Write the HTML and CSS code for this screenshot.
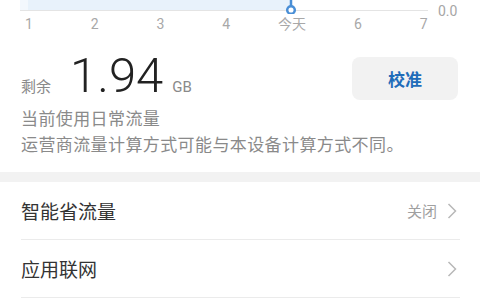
FILE: index.html
```html
<!DOCTYPE html>
<html lang="zh-CN">
<head>
    <meta charset="UTF-8">
    <meta name="viewport" content="width=device-width, initial-scale=1.0">
    <title>流量管理</title>
    <link rel="stylesheet" href="styles.css">
</head>
<body>
    <div class="chart">
        <svg class="chart-plot" width="480" height="14" viewBox="0 0 480 14">
            <rect x="20" y="0" width="8" height="10" fill="#f3f8fd"/>
            <rect x="28" y="0" width="263" height="10" fill="#e8f2fb"/>
            <line x1="20" y1="10.5" x2="428" y2="10.5" stroke="#e4e4e4" stroke-width="1"/>
            <line x1="291" y1="0" x2="291" y2="6" stroke="#4a8fd6" stroke-width="2.5"/>
            <circle cx="291" cy="10" r="3.8" fill="#fff" stroke="#4a8fd6" stroke-width="2.5"/>
        </svg>
        <span class="chart-max">0.0</span>
        <div class="chart-axis">
            <span>1</span>
            <span>2</span>
            <span>3</span>
            <span>4</span>
            <span>今天</span>
            <span>6</span>
            <span>7</span>
        </div>
    </div>

    <div class="usage">
        <div class="remain">
            <span class="remain-label">剩余</span>
            <span class="remain-value">1.94</span>
            <span class="remain-unit">GB</span>
        </div>
        <button class="calibrate">校准</button>
    </div>

    <div class="desc">
        <p>当前使用日常流量</p>
        <p>运营商流量计算方式可能与本设备计算方式不同。</p>
    </div>

    <div class="gap"></div>

    <div class="list">
        <div class="list-item">
            <span class="item-title">智能省流量</span>
            <span class="item-extra">
                <span class="item-value">关闭</span>
                <svg class="chevron" width="10" height="16" viewBox="0 0 10 16">
                    <polyline points="1.5,1 8.5,8 1.5,15" fill="none" stroke="#b8b8b8" stroke-width="1.5"/>
                </svg>
            </span>
        </div>
        <div class="list-item">
            <span class="item-title">应用联网</span>
            <span class="item-extra">
                <svg class="chevron" width="10" height="16" viewBox="0 0 10 16">
                    <polyline points="1.5,1 8.5,8 1.5,15" fill="none" stroke="#b8b8b8" stroke-width="1.5"/>
                </svg>
            </span>
        </div>
    </div>
</body>
</html>
```

FILE: styles.css
```css
body {
    margin: 0;
    padding: 0;
    background-color: #fff;
    font-family: Roboto, "Noto Sans CJK SC", sans-serif;
    color: #333;
    width: 480px;
    height: 300px;
    overflow: hidden;
}

.chart {
    position: relative;
    height: 40px;
}

.chart-plot {
    display: block;
}

.chart-max {
    position: absolute;
    top: 2px;
    left: 438px;
    font-size: 14px;
    line-height: 18px;
    color: #a6a6a6;
}

.chart-axis {
    display: grid;
    grid-template-columns: repeat(7, 65.8px);
    margin-left: -4px;
    margin-top: 2px;
    font-size: 14px;
    line-height: 16px;
    color: #a8a8a8;
    text-align: center;
}

.usage {
    display: flex;
    justify-content: space-between;
    align-items: flex-start;
    padding: 13px 22px 0 21px;
}

.remain {
    display: flex;
    align-items: baseline;
    height: 46px;
    line-height: 46px;
}

.remain-label {
    font-size: 15px;
    line-height: 1;
    color: #8a8a8a;
}

.remain-value {
    font-size: 49px;
    font-weight: 300;
    color: #222;
    margin-left: 19px;
}

.remain-unit {
    font-size: 15px;
    line-height: 1;
    color: #8a8a8a;
    margin-left: 9px;
}

.calibrate {
    margin-top: 4px;
    width: 106px;
    height: 43px;
    border: none;
    border-radius: 8px;
    background-color: #f2f2f2;
    font-family: "Noto Sans CJK SC", sans-serif;
    font-size: 17px;
    font-weight: 600;
    color: #1f6cb9;
}

.desc {
    margin-top: 6px;
    padding: 0 21px;
}

.desc p {
    margin: 0;
    font-size: 17px;
    line-height: 26px;
    letter-spacing: 0.4px;
    color: #8a8a8a;
}

.gap {
    margin-top: 14px;
    height: 10px;
    background-color: #f2f2f2;
}

.list-item {
    display: flex;
    justify-content: space-between;
    align-items: center;
    height: 57px;
    margin: 0 20px 0 21px;
    padding-right: 3px;
    border-bottom: 1px solid #ebebeb;
}

.item-title {
    font-size: 19px;
    color: #333;
}

.item-extra {
    display: flex;
    align-items: center;
}

.item-value {
    font-size: 15px;
    color: #a0a0a0;
    margin-right: 10px;
}

.chevron {
    display: block;
}
```
